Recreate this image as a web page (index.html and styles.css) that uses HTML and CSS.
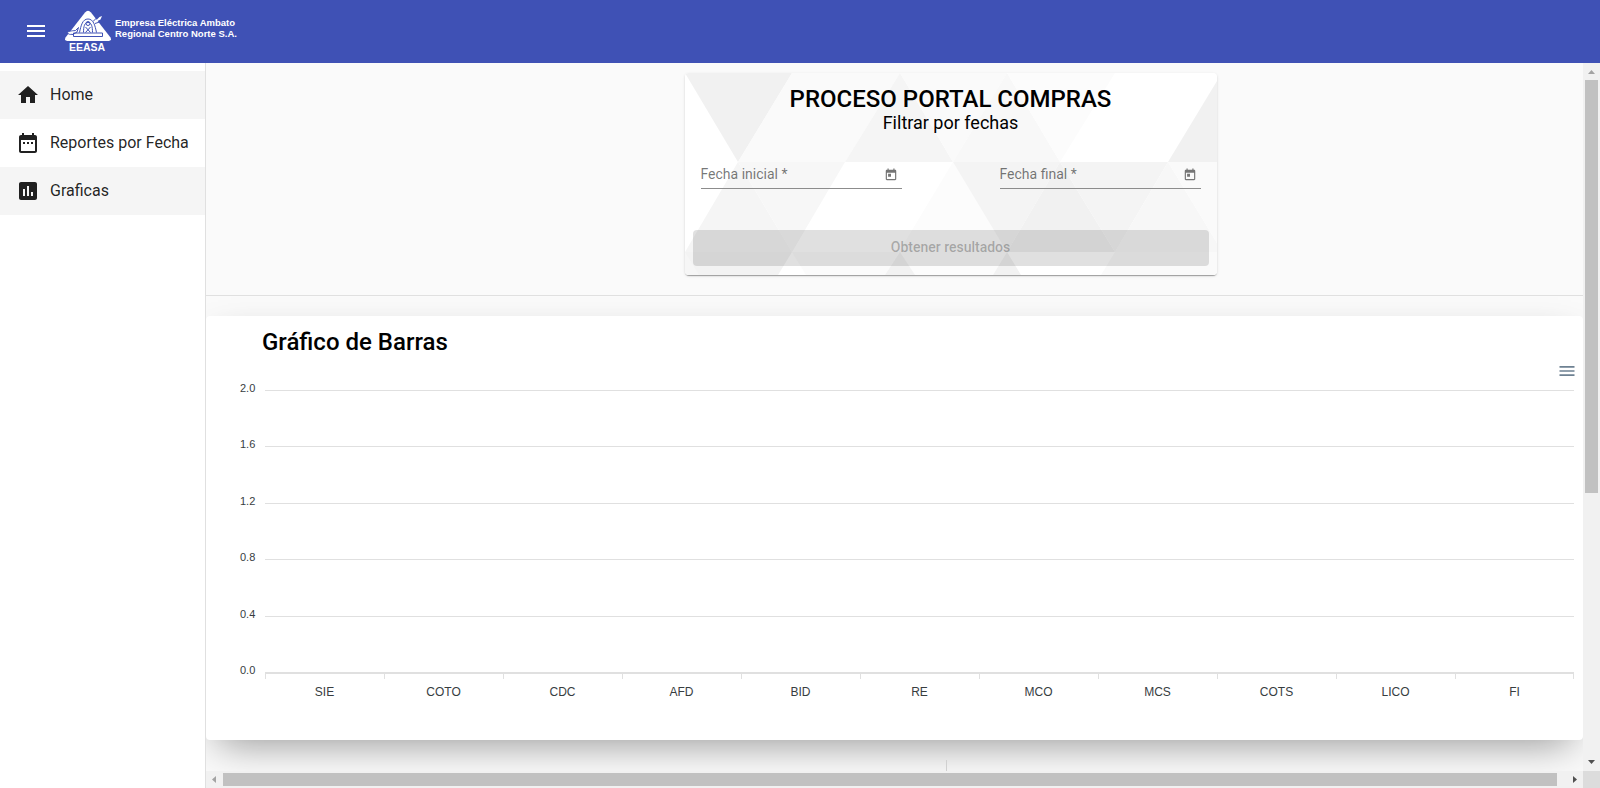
FILE: index.html
```html
<!DOCTYPE html>
<html lang="es">
<head>
<meta charset="utf-8">
<title>Proceso Portal Compras</title>
<link rel="stylesheet" href="styles.css">
</head>
<body>
<header class="toolbar">
  <button class="icon-button" type="button" aria-label="Menú">
    <svg viewBox="0 0 24 24"><path d="M3 18h18v-2H3v2zm0-5h18v-2H3v2zm0-7v2h18V6H3z"/></svg>
  </button>
  <svg class="brand" viewBox="0 0 352 84">
    <path d="M40 5Q46-2 52 5L91 55Q94 62 87 62H5Q-2 62 1 55Z"/>
    <g fill="none" stroke="#3f51b5" stroke-width="2">
      <path d="M17 46h58v7H17z"/>
      <path d="M29 45c3-14 6-27 17-27s14 13 17 27"/>
      <path d="M37 45c0-12 2-20 9-20s9 8 9 20"/>
      <circle cx="46" cy="27" r="4"/>
      <path d="M41 34l10 11M51 34l-10 11"/>
      <path d="M56 23l8-8 9-4M60 27l9-3 6-6"/>
      <path d="M6 43l15-2 6-6-3 9-8 5-9-1"/>
    </g>
    <path d="M61 22l8-8 5-2-3 7-8 4zM5 44l13-1-8 5z"/>
    <text x="8" y="81" font-size="21">EEASA</text>
    <text x="100" y="31" font-size="19">Empresa Eléctrica Ambato</text>
    <text x="100" y="53" font-size="19">Regional Centro Norte S.A.</text>
  </svg>
</header>

<div class="shell">
  <nav class="sidenav">
    <a class="nav-item shaded" href="#">
      <svg viewBox="0 0 24 24"><path d="M10 20v-6h4v6h5v-8h3L12 3 2 12h3v8z"/></svg>
      <span>Home</span>
    </a>
    <a class="nav-item" href="#">
      <svg viewBox="0 0 24 24"><path d="M9 11H7v2h2v-2zm4 0h-2v2h2v-2zm4 0h-2v2h2v-2zm2-7h-1V2h-2v2H8V2H6v2H5c-1.11 0-1.99.9-1.99 2L3 20c0 1.1.89 2 2 2h14c1.1 0 2-.9 2-2V6c0-1.1-.9-2-2-2zm0 16H5V9h14v11z"/></svg>
      <span>Reportes por Fecha</span>
    </a>
    <a class="nav-item shaded" href="#">
      <svg viewBox="0 0 24 24"><path d="M19 3H5c-1.1 0-2 .9-2 2v14c0 1.1.9 2 2 2h14c1.1 0 2-.9 2-2V5c0-1.1-.9-2-2-2zM9 17H7v-7h2v7zm4 0h-2V7h2v10zm4 0h-2v-4h2v4z"/></svg>
      <span>Graficas</span>
    </a>
  </nav>

  <main class="content">
    <section class="filter-area">
      <form class="filter-card">
        <svg class="filter-pattern" viewBox="0 0 532 202" preserveAspectRatio="none" aria-hidden="true">
          <path fill="#fff" d="M0 0h532v202H0z"/>
          <path fill="#f1f1f1" d="M0 0h107L53 89z"/>
          <path fill="#fafafa" d="M107 0h108l-55 89H53z"/>
          <path fill="#f5f5f5" d="M215 0l53 89H160z"/>
          <path fill="#fafafa" d="M215 0h107l-54 89z"/>
          <path fill="#f8f8f8" d="M322 0l53 89H268z"/>
          <path fill="#fcfcfc" d="M322 0h108l-55 89z"/>
          <path fill="#f1f1f1" d="M532 8v81h-49z"/>
          <path fill="#f5f5f5" d="M53 89l54 90H0z"/>
          <path fill="#f7f7f7" d="M53 89h107l-53 90z"/>
          <path fill="#f3f3f3" d="M0 179h107l-14 23H0z"/>
          <path fill="#f6f6f6" d="M0 179l14 23H0z"/>
          <path fill="#fbfbfb" d="M107 179h108l-15 23h-79z"/>
          <path fill="#fcfcfc" d="M268 89l54 90-14 23H200z"/>
          <path fill="#f4f4f4" d="M268 89h107l-53 90z"/>
          <path fill="#f1f1f1" d="M375 89l55 90H322z"/>
          <path fill="#f4f4f4" d="M375 89h108l-53 90z"/>
          <path fill="#f7f7f7" d="M483 89l49 81v9H430z"/>
          <path fill="#fafafa" d="M483 89h49v81z"/>
          <path fill="#f2f2f2" d="M215 179l15 23h-30zM322 179l14 23h-28z"/>
          <path fill="#fafafa" d="M430 179h102v23H416z"/>
        </svg>
        <h1 class="filter-title">PROCESO PORTAL COMPRAS</h1>
        <p class="filter-subtitle">Filtrar por fechas</p>
        <div class="fields">
          <div class="field">
            <input id="start" type="text" placeholder="Fecha inicial *" aria-label="Fecha inicial" required>
            <button class="date-button" type="button" aria-label="Abrir calendario">
              <svg viewBox="0 0 24 24"><path d="M19 3h-1V1h-2v2H8V1H6v2H5c-1.11 0-1.99.9-1.99 2L3 19c0 1.1.89 2 2 2h14c1.1 0 2-.9 2-2V5c0-1.1-.9-2-2-2zm0 16H5V8h14v11zM7 10h5v5H7z"/></svg>
            </button>
          </div>
          <div class="field">
            <input id="end" type="text" placeholder="Fecha final *" aria-label="Fecha final" required>
            <button class="date-button" type="button" aria-label="Abrir calendario">
              <svg viewBox="0 0 24 24"><path d="M19 3h-1V1h-2v2H8V1H6v2H5c-1.11 0-1.99.9-1.99 2L3 19c0 1.1.89 2 2 2h14c1.1 0 2-.9 2-2V5c0-1.1-.9-2-2-2zm0 16H5V8h14v11zM7 10h5v5H7z"/></svg>
            </button>
          </div>
        </div>
        <button class="submit" type="submit" disabled>Obtener resultados</button>
      </form>
    </section>
    <hr class="divider">
    <section class="chart-card">
      <h2 class="chart-title">Gráfico de Barras</h2>
      <div class="chart-tools">
        <button class="chart-menu" type="button" aria-label="Opciones del gráfico">
          <svg viewBox="0 0 24 24"><path d="M3 18h18v-2H3v2zm0-5h18v-2H3v2zm0-7v2h18V6H3z"/></svg>
        </button>
      </div>
      <div class="chart">
        <div class="y-axis"><span>2.0</span><span>1.6</span><span>1.2</span><span>0.8</span><span>0.4</span><span>0.0</span></div>
        <div class="plot"><i></i><i></i><i></i><i></i><i></i></div>
        <div class="x-axis"><span>SIE</span><span>COTO</span><span>CDC</span><span>AFD</span><span>BID</span><span>RE</span><span>MCO</span><span>MCS</span><span>COTS</span><span>LICO</span><span>FI</span></div>
      </div>
    </section>
    <div class="next-row"><i></i></div>
  </main>

  <div class="scroll-y" aria-hidden="true">
    <svg class="arrow-idle" viewBox="0 0 17 17"><path d="M5 11l3.500-4L12 11z"/></svg>
    <div class="track-y"><div class="thumb-y"></div></div>
    <svg class="arrow" viewBox="0 0 17 17"><path d="M5 6h7l-3.500 4z"/></svg>
  </div>
  <div class="scroll-x" aria-hidden="true">
    <svg class="arrow-idle" viewBox="0 0 17 17"><path d="M10 5v7L6 8.500z"/></svg>
    <div class="track-x"><div class="thumb-x"></div></div>
    <svg class="arrow" viewBox="0 0 17 17"><path d="M7 5v7l4-3.500z"/></svg>
  </div>
  <div class="scroll-corner"></div>
</div>
</body>
</html>
```
FILE: styles.css
```css
* { box-sizing: border-box; }
body {
  margin: 0;
  height: 100vh;
  display: flex;
  flex-direction: column;
  overflow: hidden;
  font-family: Roboto, "Liberation Sans", sans-serif;
  color: #000;
  background: #fafafa;
}
button { font: inherit; color: inherit; border: 0; padding: 0; background: none; }
svg { display: block; fill: currentColor; }

.toolbar {
  flex: none;
  height: 63px;
  display: flex;
  align-items: center;
  padding: 0 24px 2px;
  gap: 17px;
  background: #3f51b5;
  color: #fff;
}
.icon-button svg { width: 24px; height: 24px; }
.brand { width: 176px; height: 42px; font-family: "Liberation Sans", Arial, sans-serif; font-weight: 700; }

.shell {
  flex: 1;
  min-height: 0;
  display: grid;
  grid-template-columns: 206px minmax(0, 1fr) 17px;
  grid-template-rows: minmax(0, 1fr) 17px;
}
.sidenav {
  grid-row: 1 / 3;
  padding-top: 8px;
  background: #fff;
  border-right: 1px solid #e0e0e0;
}
.nav-item {
  display: flex;
  align-items: center;
  height: 48px;
  padding: 0 16px;
  gap: 10px;
  font-size: 16px;
  color: rgba(0, 0, 0, 0.87);
  text-decoration: none;
  white-space: nowrap;
}
.nav-item svg { width: 24px; height: 24px; flex: none; }
.nav-item span { padding-bottom: 2px; }
.shaded { background: #f5f5f5; }

.content { overflow: hidden; }
.filter-area { display: flex; justify-content: center; padding: 10px 0 20px 112px; }
.filter-card {
  position: relative;
  z-index: 0;
  width: 532px;
  padding: 10px 8px 9px;
  border-radius: 4px;
  overflow: hidden;
  text-align: center;
  box-shadow: 0 2px 1px -1px rgba(0, 0, 0, 0.2), 0 1px 1px rgba(0, 0, 0, 0.14), 0 1px 3px rgba(0, 0, 0, 0.12);
}
.filter-pattern { position: absolute; inset: 0; width: 100%; height: 100%; z-index: -1; }
.filter-title { margin: 0; font-size: 24px; line-height: 32px; font-weight: 500; }
.filter-subtitle { margin: 0; font-size: 18px; line-height: 16px; }
.fields { display: flex; justify-content: space-between; padding: 30px 8px 41px; }
.field { display: flex; align-items: center; width: 201px; height: 28px; border-bottom: 1px solid #8c8c8c; }
.field input {
  flex: 1;
  min-width: 0;
  padding: 0 0 2px;
  border: 0;
  outline: 0;
  background: none;
  font: 14px/16px Roboto, sans-serif;
}
.field input::placeholder { color: rgba(0, 0, 0, 0.54); opacity: 1; }
.date-button { margin-right: 4px; color: #757575; }
.date-button svg { width: 14px; height: 14px; }
.submit {
  display: block;
  width: 100%;
  height: 36px;
  padding-bottom: 2px;
  border-radius: 4px;
  font-size: 14px;
  font-weight: 500;
  color: rgba(0, 0, 0, 0.26);
  background: rgba(0, 0, 0, 0.12);
}
.divider { margin: 0; border: 0; border-top: 1px solid #e0e0e0; }

.chart-card {
  margin-top: 20px;
  padding: 10px 9px 41px 34px;
  border-radius: 4px;
  background: #fff;
  box-shadow: 0 15px 38px -12px rgba(0, 0, 0, 0.42);
}
.chart-title { margin: 0; padding-left: 22px; font-size: 24px; line-height: 32px; font-weight: 500; }
.chart-tools { display: flex; justify-content: flex-end; height: 25px; }
.chart-menu { margin-right: -3px; color: #6e8192; }
.chart-menu svg { width: 20px; height: 20px; }
.chart {
  display: grid;
  grid-template-columns: 25px minmax(0, 1fr);
  font-family: "Liberation Sans", Arial, sans-serif;
  color: #373d3f;
}
.y-axis {
  display: flex;
  flex-direction: column;
  justify-content: space-between;
  height: 294px;
  margin-top: -1px;
  font-size: 11px;
  line-height: 12px;
}
.plot {
  display: grid;
  grid-template-rows: repeat(5, 1fr);
  height: 284px;
  margin-top: 7px;
  border-bottom: 2px solid #e0e0e0;
}
.plot i { border-top: 1px solid #e0e0e0; }
.x-axis {
  grid-column: 2;
  display: grid;
  grid-template-columns: repeat(11, 1fr);
  margin-top: -2px;
  font-size: 12px;
  line-height: 14px;
  text-align: center;
}
.x-axis span::before {
  content: "";
  display: block;
  height: 6px;
  margin-bottom: 6px;
  border-left: 1px solid #e0e0e0;
}
.x-axis span:last-child::before { border-right: 1px solid #e0e0e0; }
.x-axis { margin-top: -3px; }
.next-row { display: flex; justify-content: center; padding: 20px 0 0 104px; }
.next-row i { width: 1px; height: 40px; background: #d0d0d0; }

.scroll-y { display: flex; flex-direction: column; background: #f1f1f1; }
.scroll-x { grid-column: 2; display: flex; background: #f1f1f1; }
.scroll-y svg, .scroll-x svg { width: 17px; height: 17px; flex: none; }
.arrow { color: #505050; }
.arrow-idle { color: #a3a3a3; }
.track-y { flex: 1; padding: 0 2px; }
.thumb-y { height: 61.3%; background: #c1c1c1; }
.track-x { flex: 1; padding: 2px 0; }
.thumb-x { width: 99.3%; height: 13px; background: #c1c1c1; }
.scroll-corner { background: #dcdcdc; }
```
